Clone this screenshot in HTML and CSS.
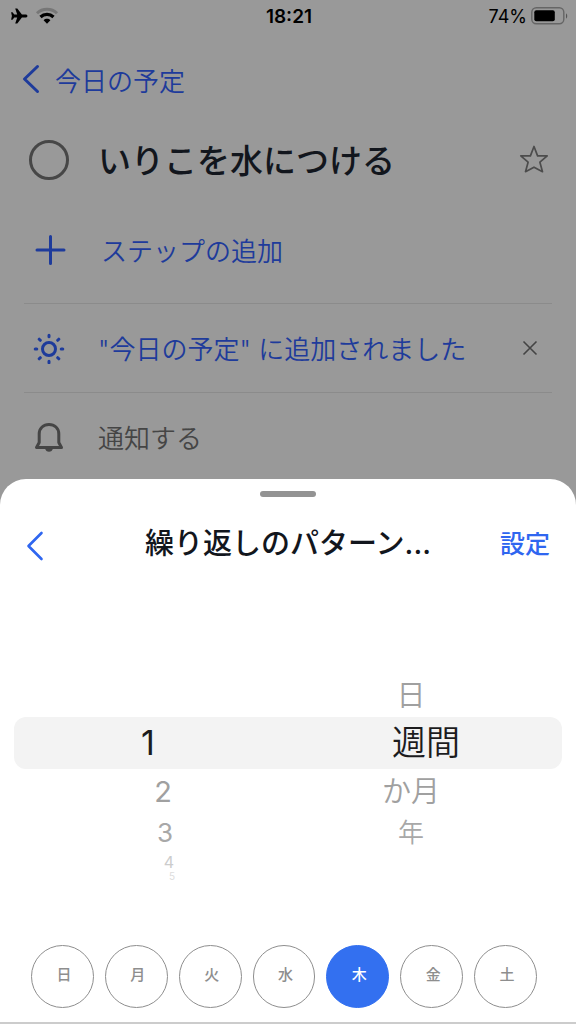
FILE: index.html
```html
<!DOCTYPE html>
<html lang="ja">
<head>
<meta charset="utf-8">
<meta name="viewport" content="width=device-width, initial-scale=1">
<title>今日の予定</title>
<link rel="stylesheet" href="styles.css">
</head>
<body>
<div class="status">
  <div class="status-left">
    <svg width="18" height="16" viewBox="0 0 18 16"><path d="M17.500 8c0-.9-.9-1.500-2-1.500h-3.600L7.300.4H5.200l2 6.100H4.300L2.500 4.300H1.100L1.900 8l-.8 3.700h1.400l1.800-2.200h2.900l-2 6.100h2.100l4.600-6.100h3.600c1.100 0 2-.6 2-1.500z"/></svg>
    <svg width="24" height="18" viewBox="0 0 24 18" fill="none"><path d="M2 6.200C7.500.8 16.500.8 22 6.200" stroke="#777" stroke-width="3"/><path d="M5.500 10C9.200 6.400 14.800 6.400 18.500 10" stroke="#000" stroke-width="3.200"/><path d="M8.600 13.200c1.900-1.900 4.900-1.900 6.800 0L12 16.700z" fill="#000"/></svg>
  </div>
  <time class="clock">18:21</time>
  <div class="status-right">
    <span>74%</span>
    <svg width="37" height="18" viewBox="0 0 37 18"><rect x=".8" y=".8" width="32" height="16" rx="4.500" fill="none" stroke="#666" stroke-width="1.400"/><rect x="3.300" y="3.300" width="20.500" height="11" rx="2"/><path d="M35 6.300c1.700 1 1.700 4.400 0 5.400z" fill="#555"/></svg>
  </div>
</div>

<main class="task">
  <a class="back" href="#">
    <svg width="18" height="30" viewBox="0 0 18 30"><path d="M15.500 2.500 2.500 15l13 12.500" fill="none" stroke="currentColor" stroke-width="3" stroke-linecap="round" stroke-linejoin="round"/></svg>
    <span>今日の予定</span>
  </a>
  <div class="title-row">
    <input class="done" type="checkbox" aria-label="完了にする">
    <h1>いりこを水につける</h1>
    <button class="icon-button star" aria-label="重要">
      <svg width="30" height="30" viewBox="0 0 30 30"><path d="m15 1.500 3.600 9.400h9.600l-7.300 6.300 2.600 9.500L15 22.200l-8.500 4.500 2.600-9.500-7.300-6.300h9.600z" fill="none" stroke="#4c4c4c" stroke-width="1.700" stroke-linejoin="round"/></svg>
    </button>
  </div>
  <button class="row add-step">
    <svg width="32" height="32" viewBox="0 0 32 32"><path d="M16.500 2.500v27M3 16h27" stroke="currentColor" stroke-width="3" stroke-linecap="round"/></svg>
    <span>ステップの追加</span>
  </button>
  <div class="row my-day">
    <svg width="32" height="32" viewBox="0 0 32 32" fill="none" stroke="currentColor" stroke-width="3" stroke-linecap="round"><circle cx="16" cy="17" r="6.500"/><path d="M16 3.200v1.600M16 29.200v1.600M2.200 17h1.600M28.200 17h1.600M6.200 7.200l1.100 1.100M24.700 25.700l1.100 1.100M6.200 26.800l1.100-1.100M24.700 8.300l1.100-1.100"/></svg>
    <span>"今日の予定" に追加されました</span>
    <button class="icon-button remove" aria-label="削除">
      <svg width="16" height="16" viewBox="0 0 16 16"><path d="m1.500 1.500 13 13M14.500 1.500l-13 13" stroke="#444" stroke-width="1.600"/></svg>
    </button>
  </div>
  <button class="row remind">
    <svg width="32" height="32" viewBox="0 0 32 32"><path d="M3.500 26.500h25L25.800 21.500V13C25.800 7 21.500 3.500 16 3.500S6.200 7 6.200 13v8.500z" fill="none" stroke="currentColor" stroke-width="3" stroke-linejoin="round"/><path d="M12 27.500h8c-.5 2-2 3.300-4 3.300s-3.500-1.300-4-3.300z" fill="currentColor"/></svg>
    <span>通知する</span>
  </button>
</main>

<section class="sheet" aria-labelledby="sheet-title">
  <div class="handle"></div>
  <header class="sheet-header">
    <button class="icon-button sheet-back" aria-label="戻る">
      <svg width="18" height="30" viewBox="0 0 18 30"><path d="M15.500 2 2.500 15l13 13" fill="none" stroke="currentColor" stroke-width="2.600" stroke-linecap="round" stroke-linejoin="round"/></svg>
    </button>
    <h2 id="sheet-title">繰り返しのパターン...</h2>
    <button class="set">設定</button>
  </header>
  <div class="picker">
    <div class="wheel numbers">
      <span class="option near"></span>
      <button class="option selected">1</button>
      <button class="option near">2</button>
      <button class="option far">3</button>
      <button class="option farther">4</button>
      <button class="option edge">5</button>
    </div>
    <div class="wheel units">
      <button class="option near">日</button>
      <button class="option selected">週間</button>
      <button class="option near">か月</button>
      <button class="option far">年</button>
    </div>
  </div>
  <div class="days">
    <button class="day">日</button>
    <button class="day">月</button>
    <button class="day">火</button>
    <button class="day">水</button>
    <button class="day active" aria-pressed="true">木</button>
    <button class="day">金</button>
    <button class="day">土</button>
  </div>
</section>
</body>
</html>
```

FILE: styles.css
```css
* { box-sizing: border-box; }

body {
  margin: 0;
  min-height: 100vh;
  display: flex;
  flex-direction: column;
  background: #999;
  color: #12161d;
  font-family: Inter, "Noto Sans CJK JP", sans-serif;
}

button {
  margin: 0;
  padding: 0;
  border: 0;
  background: none;
  color: inherit;
  font: inherit;
}

svg { display: block; flex: none; }

.status {
  display: grid;
  grid-template-columns: 1fr auto 1fr;
  align-items: center;
  height: 32px;
  padding: 0 8px 0 10px;
  color: #000;
  font-size: 18px;
}
.status-left { display: flex; align-items: center; gap: 7px; }
.status-right { display: flex; align-items: center; justify-content: flex-end; gap: 4px; }
.clock { font-size: 19px; font-weight: 600; }

.task { font-size: 26px; font-weight: 350; }

.back {
  display: flex;
  align-items: center;
  gap: 15px;
  height: 96px;
  padding: 0 0 2px 22px;
  color: #1e3b9b;
  text-decoration: none;
}

.title-row {
  display: flex;
  align-items: center;
  height: 64px;
  padding: 0 27px 0 29px;
}
.done {
  appearance: none;
  width: 40px;
  height: 40px;
  margin: 0 29px 0 0;
  border: 3px solid #474747;
  border-radius: 50%;
}
h1 { flex: 1; margin: 0; padding-bottom: 2px; font-size: 33px; font-weight: 500; }

.row {
  display: flex;
  align-items: center;
  gap: 33px;
  width: calc(100% - 48px);
  height: 89px;
  margin: 0 24px;
  padding: 0 14px 0 9px;
  border-bottom: 1px solid #8b8b8b;
  color: #1e3b9b;
  text-align: left;
}
.row span { flex: 1; padding-bottom: 2px; }
.add-step { height: 107px; margin-top: 5px; gap: 35px; padding-left: 10px; }
.remind { height: 86px; padding-top: 2px; border: 0; color: #454545; }

.sheet {
  flex: 1;
  display: flex;
  flex-direction: column;
  padding-bottom: 14px;
  border-bottom: 2px solid #ccc;
  border-radius: 26px 26px 0 0;
  background: #fff;
}
.handle {
  width: 56px;
  height: 6px;
  margin: 12px auto 0;
  border-radius: 3px;
  background: #939393;
}
.sheet-header {
  display: grid;
  grid-template-columns: 1fr auto 1fr;
  align-items: center;
  height: 92px;
  padding: 0 26px;
}
.sheet-back { justify-self: start; padding-top: 6px; color: #2f66f0; }
h2 { margin: 0; padding-bottom: 4px; font-size: 29px; font-weight: 500; }
.set { justify-self: end; padding-bottom: 2px; color: #2f66f0; font-size: 25px; font-weight: 500; }

.picker {
  display: grid;
  grid-template-columns: 1fr 1fr;
  height: 206px;
  margin: 84px 14px 0;
  background: #fff;
}
.wheel { display: flex; flex-direction: column; }
.option {
  display: flex;
  align-items: center;
  justify-content: center;
  flex: none;
  line-height: 1;
}
.selected { height: 52px; color: #1c1c1e; font-size: 34px; background: #f3f3f3; }
.near { height: 44px; color: #a0a0a0; font-size: 29px; }
.far { height: 40px; color: #a8a8a8; font-size: 26px; }
.farther { height: 18px; color: #ccc; font-size: 16px; }
.edge { height: 10px; color: #ddd; font-size: 10px; }
.numbers .selected { padding-right: 6px; border-radius: 12px 0 0 12px; }
.numbers .near { padding-left: 24px; }
.numbers .far { padding-left: 28px; }
.numbers .farther { padding-left: 36px; }
.numbers .edge { padding-left: 42px; }
.units { font-weight: 350; }
.units .selected { padding-left: 2px; border-radius: 0 12px 12px 0; }
.units .near, .units .far { padding-right: 28px; }

.days {
  display: grid;
  grid-template-columns: repeat(7, 1fr);
  gap: 11px;
  margin: 66px 39px 0 31px;
}
.day {
  aspect-ratio: 1;
  padding: 0 0 6px 3px;
  border: 1px solid #8e8e8e;
  border-radius: 50%;
  color: #8e8e8e;
  font-size: 15px;
  font-weight: 500;
}
.day.active { border-color: #3370f0; background: #3370f0; color: #fff; }
```
